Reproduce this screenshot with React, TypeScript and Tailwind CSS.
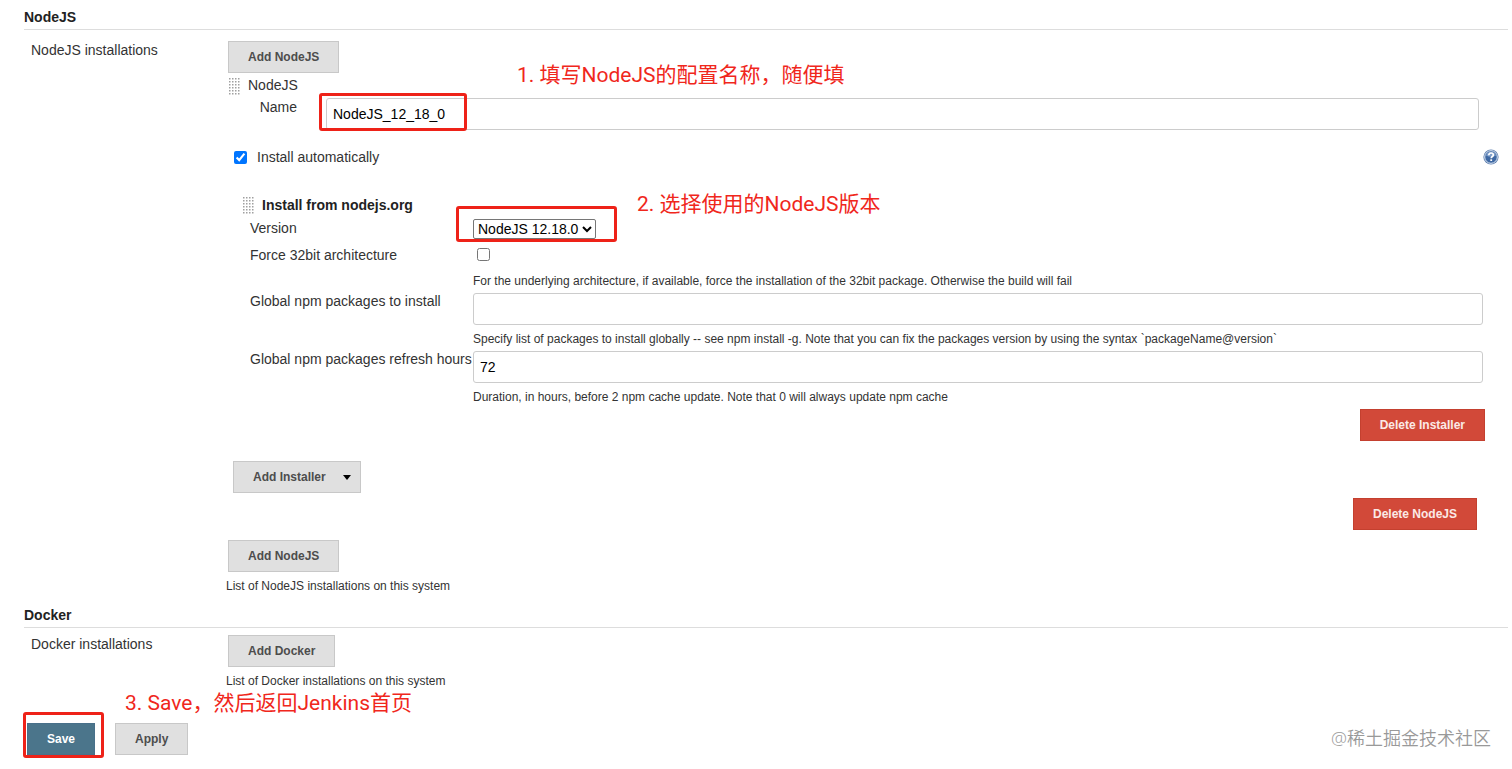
import { useState } from "react";
import type { ReactNode } from "react";

const annotationText =
    "absolute whitespace-nowrap text-[21px] leading-6 text-[#f0271c] font-['Roboto','Noto_Sans_CJK_SC',sans-serif]";
const annotationBox = "absolute pointer-events-none rounded-[3px] border-3 border-[#ee2218]";
const textInput =
    "block w-full h-8 rounded-[3px] border border-[#ccc] bg-white px-1.5 text-[14px] text-black outline-none";

function Button({ children, className = "" }: { children: ReactNode; className?: string }) {
    return (
        <button
            type="button"
            className={`h-8 border px-[19px] text-[12px] font-bold whitespace-nowrap ${className || "border-[#c8c8c8] bg-[#e0e0e0] text-[#4d4d4d]"}`}
        >
            {children}
        </button>
    );
}

function DangerButton({ children }: { children: ReactNode }) {
    return <Button className="border-[#c4402f] bg-[#d24939] text-[#fbe9e6]">{children}</Button>;
}

function Grip() {
    return (
        <svg width="12" height="18" viewBox="0 0 12 18" aria-hidden="true" className="shrink-0">
            {[0, 3, 6, 9].map((x) =>
                [0, 3, 6, 9, 12, 15].map((y) => (
                    <rect key={`${x}-${y}`} x={x + 1} y={y + 1} width="1.5" height="1.5" fill="#a0a0a0" />
                ))
            )}
        </svg>
    );
}

function HelpIcon() {
    return (
        <svg width="16" height="16" viewBox="0 0 16 16" aria-hidden="true">
            <circle cx="8" cy="8" r="7.6" fill="#5f80b0" />
            <circle cx="8" cy="8" r="6.3" fill="#3e68a3" stroke="#dbe5f2" strokeWidth="1" />
            <path d="M3 6.5a5.2 5.2 0 0 1 10 0Q8 9 3 6.5z" fill="#7d9dc9" />
            <path
                d="M5.8 6.2c0-1.5 1-2.2 2.2-2.2s2.3.7 2.3 2c0 1.5-2.1 1.6-2.1 3.2"
                fill="none"
                stroke="#fff"
                strokeWidth="1.7"
            />
            <rect x="7.3" y="10.3" width="1.8" height="1.7" fill="#fff" />
        </svg>
    );
}

function SectionTitle({ children }: { children: ReactNode }) {
    return (
        <h2 className="border-b border-[#ddd] pt-2 pb-[3px] text-[14px] leading-[18px] font-bold text-[#222]">
            {children}
        </h2>
    );
}

function Hint({ children }: { children: ReactNode }) {
    return <p className="h-[26px] text-[12px] leading-7">{children}</p>;
}

export default function App() {
    const [name, setName] = useState("NodeJS_12_18_0");
    const [auto, setAuto] = useState(true);
    const [force, setForce] = useState(false);
    const [packages, setPackages] = useState("");
    const [hours, setHours] = useState("72");

    return (
        <form
            className="relative min-h-screen bg-white pr-1 pb-[15px] pl-6 text-[14px] text-[#333] font-['Liberation_Sans',Arial,sans-serif]"
            onSubmit={(e) => e.preventDefault()}
        >
            <SectionTitle>NodeJS</SectionTitle>
            <div className="grid grid-cols-[202px_1fr] pt-1">
                <div className="pt-[7px] pl-[7px] leading-[18px]">NodeJS installations</div>
                <div className="pt-[7px]">
                    <div className="pl-0.5">
                        <Button>Add NodeJS</Button>
                    </div>

                    <div className="flex h-[25px] items-center gap-2 pl-0.5">
                        <Grip />
                        <span>NodeJS</span>
                    </div>
                    <div className="flex pr-[29px]">
                        <label htmlFor="name" className="w-[100px] pr-[29px] text-right leading-[18px]">
                            Name
                        </label>
                        <div className="relative flex-1">
                            <input
                                id="name"
                                type="text"
                                className={textInput}
                                value={name}
                                onChange={(e) => setName(e.target.value)}
                            />
                            <span className={`${annotationBox} -top-[5px] -left-[7px] h-[38px] w-[148px]`} />
                            <span className={`${annotationText} -top-[35px] left-[191px]`}>
                                1. 填写NodeJS的配置名称，随便填
                            </span>
                        </div>
                    </div>

                    <div className="mt-[17px] flex h-5 items-center justify-between pr-[9px] pl-2">
                        <label className="flex items-center gap-2.5">
                            <input
                                type="checkbox"
                                className="size-[13px]"
                                checked={auto}
                                onChange={(e) => setAuto(e.target.checked)}
                            />
                            Install automatically
                        </label>
                        <button type="button" aria-label="Help for Install automatically">
                            <HelpIcon />
                        </button>
                    </div>

                    {/* Installer */}
                    <div className="mt-7 flex h-5 items-center gap-2 pl-4">
                        <Grip />
                        <h3 className="font-bold text-[#222]">Install from nodejs.org</h3>
                    </div>
                    <div className="grid grid-cols-[223px_1fr] pr-[25px] pl-6">
                        <label htmlFor="version" className="leading-[26px]">
                            Version
                        </label>
                        <div className="flex h-[27px] items-center">
                            <div className="relative">
                                <select
                                    id="version"
                                    className="block h-5 rounded-[2px] border border-[#767676] bg-white text-[14px] text-black"
                                >
                                    <option>NodeJS 12.18.0</option>
                                </select>
                                <span className={`${annotationBox} -top-[13px] -left-[17px] h-9 w-[161px]`} />
                                <span className={`${annotationText} -top-[27px] left-[164px]`}>
                                    2. 选择使用的NodeJS版本
                                </span>
                            </div>
                        </div>

                        <label htmlFor="force" className="leading-[26px]">
                            Force 32bit architecture
                        </label>
                        <div>
                            <div className="flex h-[25px] items-center pl-1">
                                <input
                                    id="force"
                                    type="checkbox"
                                    className="size-[13px]"
                                    checked={force}
                                    onChange={(e) => setForce(e.target.checked)}
                                />
                            </div>
                            <Hint>
                                For the underlying architecture, if available, force the installation of the 32bit
                                package. Otherwise the build will fail
                            </Hint>
                        </div>

                        <label htmlFor="packages" className="leading-4">
                            Global npm packages to install
                        </label>
                        <div>
                            <input
                                id="packages"
                                type="text"
                                className={textInput}
                                value={packages}
                                onChange={(e) => setPackages(e.target.value)}
                            />
                            <Hint>
                                Specify list of packages to install globally -- see npm install -g. Note that you can
                                fix the packages version by using the syntax `packageName@version`
                            </Hint>
                        </div>

                        <label htmlFor="hours" className="leading-4">
                            Global npm packages refresh hours
                        </label>
                        <div>
                            <input
                                id="hours"
                                type="text"
                                className={textInput}
                                value={hours}
                                onChange={(e) => setHours(e.target.value)}
                            />
                            <Hint>
                                Duration, in hours, before 2 npm cache update. Note that 0 will always update npm cache
                            </Hint>
                        </div>
                    </div>
                    <div className="flex justify-end pr-[23px]">
                        <DangerButton>Delete Installer</DangerButton>
                    </div>

                    <div className="mt-5 pl-[7px]">
                        <button
                            type="button"
                            className="flex h-8 items-center gap-[17px] border border-[#c8c8c8] bg-[#e0e0e0] pr-[9px] pl-[19px] text-[12px] font-bold text-[#4d4d4d]"
                        >
                            Add Installer
                            <svg width="8" height="5" viewBox="0 0 8 5" aria-hidden="true">
                                <path d="M0 0h8L4 5z" fill="#000" />
                            </svg>
                        </button>
                    </div>
                    <div className="mt-[5px] flex justify-end pr-[31px]">
                        <DangerButton>Delete NodeJS</DangerButton>
                    </div>

                    <div className="mt-2.5 pl-0.5">
                        <Button>Add NodeJS</Button>
                    </div>
                    <Hint>List of NodeJS installations on this system</Hint>
                </div>
            </div>

            <SectionTitle>Docker</SectionTitle>
            <div className="grid grid-cols-[202px_1fr]">
                <div className="pt-[7px] pl-[7px] leading-[18px]">Docker installations</div>
                <div className="pt-[7px]">
                    <div className="pl-0.5">
                        <Button>Add Docker</Button>
                    </div>
                    <Hint>List of Docker installations on this system</Hint>
                </div>
            </div>

            <div className="relative mt-[30px] flex gap-5 pl-[3px]">
                <div className="relative">
                    <button
                        type="submit"
                        className="block h-8 border border-[#48708a] bg-[#4b758b] px-[19px] text-[12px] font-bold text-white"
                    >
                        Save
                    </button>
                    <span className={`${annotationBox} -top-[11px] -left-1 h-[46px] w-[81px]`} />
                </div>
                <Button>Apply</Button>
                <span className={`${annotationText} -top-8 left-[101px]`}>3. Save，然后返回Jenkins首页</span>
            </div>

            <span className="absolute right-[21px] bottom-5 text-[18px] leading-6 font-[350] text-[#999] font-['Open_Sans','Noto_Sans_CJK_SC',sans-serif]">
                @稀土掘金技术社区
            </span>
        </form>
    );
}
